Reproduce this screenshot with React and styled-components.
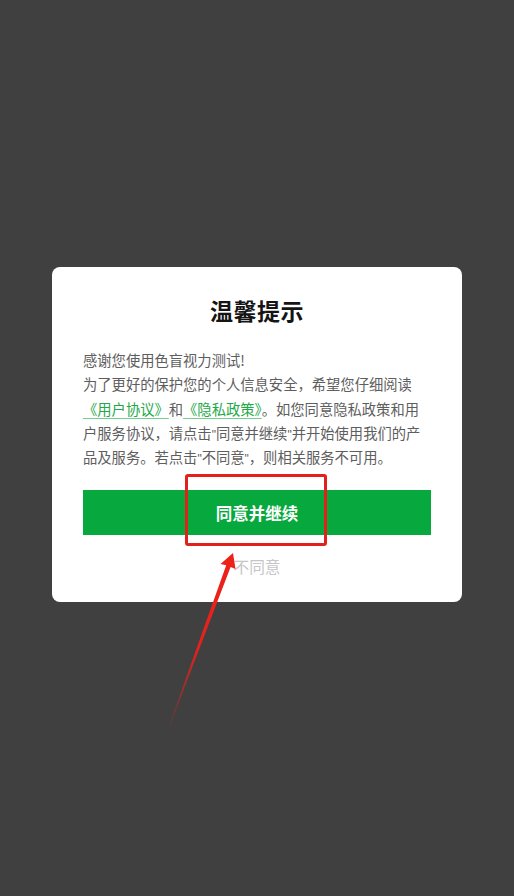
import React from "react";
import styled, { createGlobalStyle } from "styled-components";

const GlobalStyle = createGlobalStyle`
  html, body {
    margin: 0;
    padding: 0;
    background: #404040;
  }
  body {
    font-family: "Noto Sans CJK SC", "Noto Sans", sans-serif;
  }
`;

const Screen = styled.div`
  position: relative;
  width: 514px;
  height: 896px;
  background: #404040;
  display: flex;
  flex-direction: column;
  align-items: center;
  padding-top: 267px;
  box-sizing: border-box;
  overflow: hidden;
`;

const Dialog = styled.div`
  width: 410px;
  box-sizing: border-box;
  background: #fff;
  border-radius: 8px;
  padding: 27px 31px 23px;
  display: flex;
  flex-direction: column;
  align-items: center;
`;

const Title = styled.h2`
  margin: 0;
  font-size: 23px;
  line-height: 32px;
  font-weight: 700;
  color: #151515;
  letter-spacing: 0.5px;
`;

const Body = styled.p`
  margin: 22px 0 0;
  align-self: stretch;
  font-size: 14.3px;
  line-height: 24.3px;
  color: #5e5e5e;
  white-space: nowrap;
`;

const Agreement = styled.a`
  color: #22a848;
  text-decoration: underline;
  text-underline-offset: 3px;
  text-decoration-color: #74cf8c;
`;

const Quote = styled.span`
  font-family: "Liberation Sans", sans-serif;
  font-size: 12px;
  line-height: 0;
`;

const PrimaryButton = styled.button`
  margin-top: 21px;
  align-self: stretch;
  height: 45px;
  border: none;
  border-radius: 0;
  background: #07a83d;
  color: #fff;
  font-family: inherit;
  font-size: 16.5px;
  font-weight: 700;
  cursor: pointer;
`;

const TextButton = styled.button`
  margin-top: 20px;
  border: none;
  background: none;
  padding: 0;
  font-family: inherit;
  font-size: 15.7px;
  line-height: 24px;
  color: #c6c6c6;
  cursor: pointer;
`;

const Highlight = styled.div`
  position: absolute;
  left: 185px;
  top: 474px;
  width: 142px;
  height: 72px;
  box-sizing: border-box;
  border: 3px solid #e3211b;
  border-radius: 3px;
  pointer-events: none;
`;

const Overlay = styled.svg`
  position: absolute;
  left: 0;
  top: 0;
  pointer-events: none;
`;

function Arrow() {
  return (
    <Overlay width="514" height="896" viewBox="0 0 514 896">
      <defs>
        <linearGradient id="fade" x1="233" y1="553" x2="168" y2="728" gradientUnits="userSpaceOnUse">
          <stop offset="0" stopColor="#ee2219" />
          <stop offset="0.55" stopColor="#e4221c" />
          <stop offset="1" stopColor="#e4221c" stopOpacity="0.15" />
        </linearGradient>
      </defs>
      <polygon
        points="233,553 235.5,569 230.6,567 169.4,727 168.6,727 226.2,565.2 220.5,564"
        fill="url(#fade)"
      />
    </Overlay>
  );
}

export default function App() {
  return (
    <Screen>
      <GlobalStyle />
      <Dialog>
        <Title>温馨提示</Title>
        <Body>
          感谢您使用色盲视力测试!
          <br />
          为了更好的保护您的个人信息安全，希望您仔细阅读
          <br />
          <Agreement>《用户协议》</Agreement>和<Agreement>《隐私政策》</Agreement>。如您同意隐私政策和用
          <br />
          户服务协议，请点击<Quote>"</Quote>同意并继续<Quote>"</Quote>并开始使用我们的产
          <br />
          品及服务。若点击<Quote>"</Quote>不同意<Quote>"</Quote>，则相关服务不可用。
        </Body>
        <PrimaryButton>同意并继续</PrimaryButton>
        <TextButton>不同意</TextButton>
      </Dialog>
      <Highlight />
      <Arrow />
    </Screen>
  );
}
